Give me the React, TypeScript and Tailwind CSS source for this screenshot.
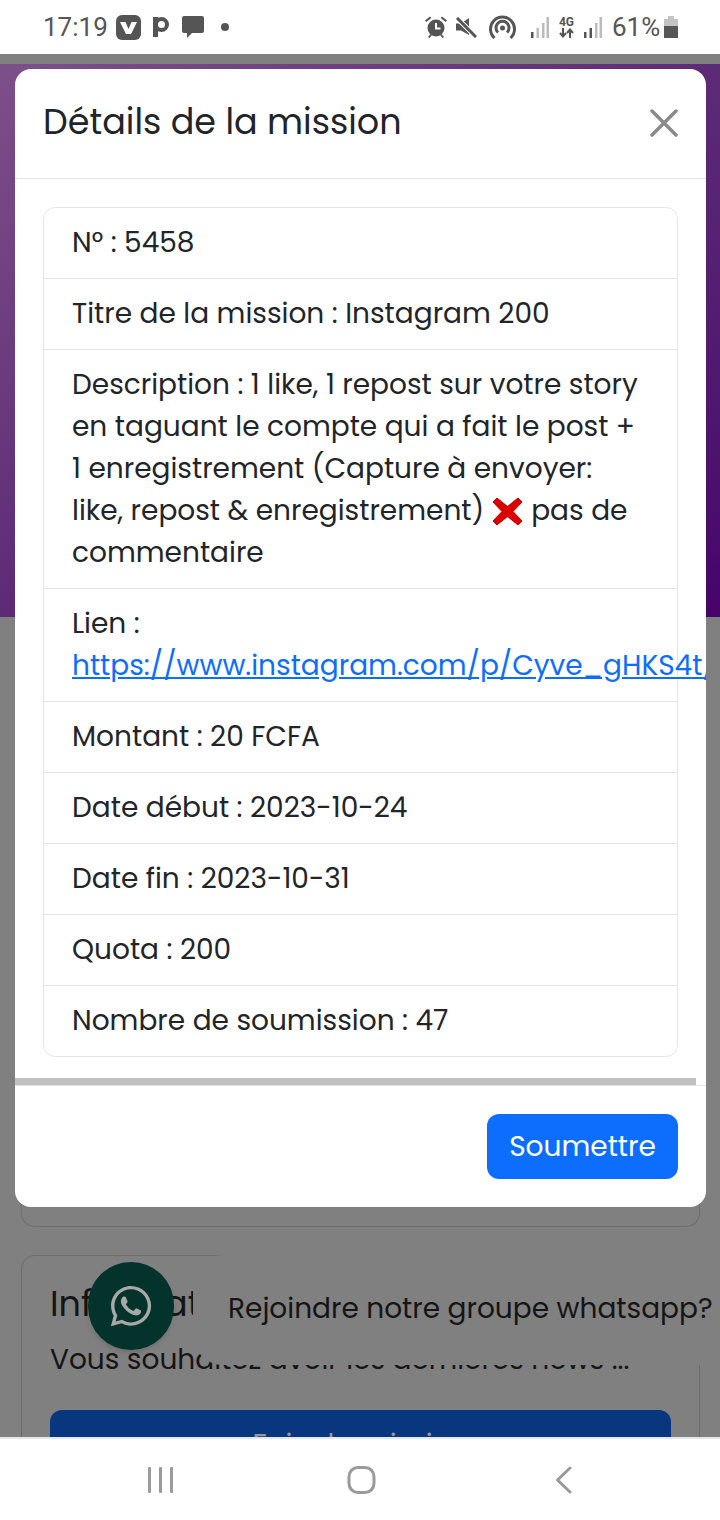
import { FaWhatsapp } from 'react-icons/fa';

const rows = [
  'N° : 5458',
  'Titre de la mission : Instagram 200',
  'Montant : 20 FCFA',
  'Date début : 2023-10-24',
  'Date fin : 2023-10-31',
  'Quota : 200',
  'Nombre de soumission : 47',
];

const Row = ({ children }: { children: React.ReactNode }) => (
  <div className="border-b border-[#e5e5e5] px-[28px] py-[14px] last:border-b-0">{children}</div>
);

const Signal = ({ dark }: { dark: number }) => (
  <svg width="18" height="21" viewBox="0 0 18 21">
    <rect x="0" y="15" width="2.500" height="6" fill="#555" />
    <rect x="5.500" y="11" width="2.500" height="10" fill={dark > 1 ? '#555' : '#bbb'} />
    <rect x="11" y="6" width="2.500" height="15" fill="#bbb" />
    <rect x="15.500" y="0" width="2.500" height="21" fill="#bbb" />
  </svg>
);

const StatusBar = () => (
  <div className="flex h-[54px] items-center justify-between bg-white pl-[43px] pr-[42px] font-['Roboto',sans-serif] text-[#555]">
    <div className="flex items-center">
      <span className="w-[64px] text-[26px] leading-[30px]">17:19</span>
      <svg width="25" height="25" viewBox="0 0 25 25" className="ml-[9px]">
        <rect width="25" height="25" rx="6" fill="#555" />
        <path d="M4 7h5.500l3 7 3-7H21l-6 12h-5z" fill="#fff" />
      </svg>
      <svg width="16" height="20" viewBox="0 0 16 20" className="ml-[12px]">
        <path d="M0 0h5v20H0z" fill="#555" />
        <circle cx="8.500" cy="7.500" r="5.500" fill="none" stroke="#555" strokeWidth="4" />
      </svg>
      <svg width="22" height="22" viewBox="0 0 22 22" className="ml-[13px]">
        <path d="M2 0h18a2 2 0 0 1 2 2v13a2 2 0 0 1-2 2H10l-5 5v-5H2a2 2 0 0 1-2-2V2a2 2 0 0 1 2-2z" fill="#555" />
      </svg>
      <span className="ml-[17px] h-[8px] w-[8px] rounded-full bg-[#555]" />
    </div>
    <div className="flex items-center">
      <svg width="24" height="22" viewBox="0 0 24 22" fill="#555">
        <circle cx="12" cy="12" r="8.500" />
        <path d="M1 4.500L6 .5l1.300 1.500-5 4zM23 4.500L18 .5l-1.300 1.500 5 4zM4 21l2.500-3 1.500 1-2.500 3zM20 21l-2.500-3-1.500 1 2.500 3z" />
        <path d="M12 7v5.500h4.500" fill="none" stroke="#fff" strokeWidth="2" />
      </svg>
      <svg width="21" height="21" viewBox="0 0 21 21" fill="#555" className="ml-[8px]">
        <path d="M0 6.500h5L13 1v17L5 13.500H0z" />
        <path d="M-1 -1l21 21" stroke="#fff" strokeWidth="5" />
        <path d="M1 1l19 19" stroke="#555" strokeWidth="3" />
      </svg>
      <svg width="27" height="24" viewBox="0 0 27 24" fill="none" stroke="#555" strokeWidth="3" className="ml-[12px]">
        <path d="M5.500 23a12 12 0 1 1 16 0" />
        <path d="M9 17.500a6.500 6.500 0 1 1 9 0" />
        <circle cx="13.500" cy="13" r="2.500" fill="#555" stroke="none" />
      </svg>
      <div className="ml-[15px]">
        <Signal dark={1} />
      </div>
      <div className="ml-[10px] flex w-[15px] flex-col items-center">
        <span className="text-[12px] font-bold leading-[12px]">4G</span>
        <svg width="15" height="10" viewBox="0 0 15 10" fill="none" stroke="#555" strokeWidth="2">
          <path d="M4 0v8M1 5l3 3.500L7 5M11 10V2M8 5l3-3.500L14 5" />
        </svg>
      </div>
      <div className="ml-[10px]">
        <Signal dark={2} />
      </div>
      <span className="ml-[10px] w-[47px] text-[26px] leading-[30px]">61%</span>
      <svg width="14" height="22" viewBox="0 0 14 22" className="ml-[5px]">
        <path d="M4 0h6v3h4v19H0V3h4z" fill="#c4c4c4" />
        <rect y="10" width="14" height="12" fill="#555" />
      </svg>
    </div>
  </div>
);

const NavBar = () => (
  <div className="flex h-[83px] items-center border-t-2 border-[#e3e8ec] bg-white pl-[147px] pt-[1px]">
    <svg width="28" height="28" viewBox="0 0 28 28" fill="#9a9a9a">
      <rect x="1" y="1" width="3" height="26" rx="1" />
      <rect x="12" y="1" width="3" height="26" rx="1" />
      <rect x="23" y="1" width="3" height="26" rx="1" />
    </svg>
    <svg width="30" height="30" viewBox="0 0 30 30" fill="none" stroke="#9a9a9a" strokeWidth="3" className="ml-[172px]">
      <rect x="2" y="2.500" width="25" height="25" rx="9" />
    </svg>
    <svg width="17" height="28" viewBox="0 0 17 28" fill="none" stroke="#9a9a9a" strokeWidth="3" strokeLinecap="round" strokeLinejoin="round" className="ml-[178px]">
      <path d="M15 2L2.500 14 15 26" />
    </svg>
  </div>
);

export default function App() {
  return (
    <div className="relative flex h-[1520px] w-[720px] flex-col overflow-hidden bg-white font-['Poppins','Inter','Noto_Sans',sans-serif] text-[28px] leading-[42px] text-[#212529]">
      <StatusBar />

      {/* page behind the modal */}
      <div className="flex-1 overflow-hidden bg-[#808080] pt-[10px]">
        <div className="h-[553px] bg-gradient-to-br from-[#7c5089] via-[#5d2b76] to-[#46036a]" />
        <div className="ml-[21px] mr-[20px] mt-[575px] h-[35px] rounded-b-[14px] border border-t-0 border-[#6e6e6e]" />
        <div className="ml-[21px] mr-[20px] mt-[28px] h-[220px] rounded-t-[14px] border-x border-t border-[#6e6e6e] px-[28px] text-[#151515]">
          <p className="mt-[21px] text-[35px] leading-[54px]">Informations</p>
          <p className="mt-[8px]">Vous souhaitez avoir les dernières news ...</p>
          <div className="mt-[29px] rounded-t-[12px] bg-[#083780] pt-[14px] text-center text-[#999]">Faire la mission</div>
        </div>
      </div>

      <NavBar />

      {/* whatsapp prompt */}
      <div className="absolute left-[193px] top-[1255px] flex h-[110px] w-[527px] items-center rounded-l-[30px] bg-[#808080] pb-[3px] pl-[35px] text-[#151515]">
        Rejoindre notre groupe whatsapp?
      </div>
      <div className="absolute left-[88px] top-[1262px] flex h-[88px] w-[86px] items-center justify-center rounded-full bg-[#04332c] shadow-md">
        <FaWhatsapp size={46} color="#a8a8a8" />
      </div>

      {/* modal */}
      <div className="absolute left-[15px] top-[69px] h-[1138px] w-[691px] overflow-hidden rounded-[16px] bg-white">
        <div className="flex h-[110px] items-center justify-between border-b border-[#e3e3e3] pb-[4px] pl-[28px] pr-[28px]">
          <h2 className="text-[35px] leading-[52px]">Détails de la mission</h2>
          <svg width="28" height="28" viewBox="0 0 28 28" stroke="#8a8a8a" strokeWidth="3.500" strokeLinecap="round" className="mt-[2px]">
            <path d="M2 2l24 24M26 2L2 26" />
          </svg>
        </div>
        <div className="px-[28px] pt-[28px]">
          <div className="rounded-[12px] border border-[#e5e5e5]">
            {rows.slice(0, 2).map((r) => (
              <Row key={r}>{r}</Row>
            ))}
            <Row>
              Description : 1 like, 1 repost sur votre story en taguant le compte qui a fait le post + 1 enregistrement (Capture à envoyer: like, repost &amp; enregistrement){' '}
              <svg width="32" height="29" viewBox="0 0 32 29" className="inline-block align-[-6px]">
                <path d="M1 5l4-4 10.500 8.500L26 1l4 4-9 9.500 9 9.500-4 4-10.500-8.500L5 28l-4-4 9-9.500z" fill="#dd0000" stroke="#b80000" strokeWidth="1" />
              </svg>{' '}
              pas de commentaire
            </Row>
            <Row>
              Lien :<br />
              <a className="whitespace-nowrap text-[#0d6efd] underline">https://www.instagram.com/p/Cyve_gHKS4t/</a>
            </Row>
            {rows.slice(2).map((r) => (
              <Row key={r}>{r}</Row>
            ))}
          </div>
        </div>
        <div className="mt-[21px] h-[7px] w-[681px] bg-[#c1c1c1]" />
        <div className="flex justify-end border-t border-[#e3e3e3] px-[28px] pt-[28px]">
          <button className="h-[65px] w-[191px] rounded-[12px] bg-[#0d6efd] text-white">Soumettre</button>
        </div>
      </div>
    </div>
  );
}
